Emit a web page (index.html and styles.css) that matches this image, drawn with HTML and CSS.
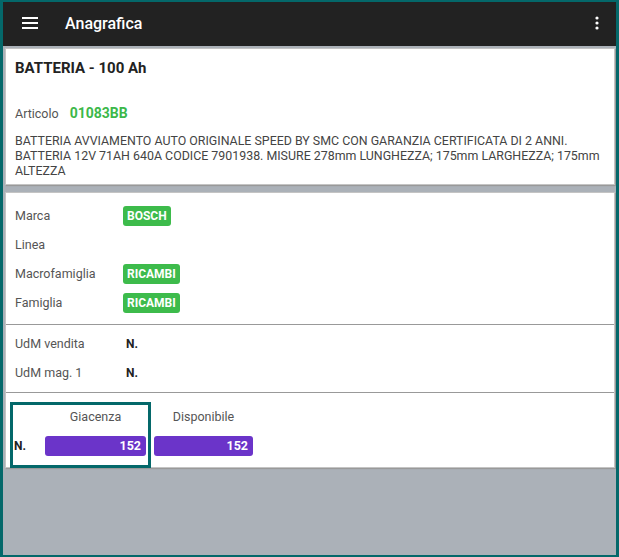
FILE: index.html
```html
<!DOCTYPE html>
<html>
<head>
<meta charset="utf-8">
<link rel="stylesheet" href="styles.css">
</head>
<body>
<div class="screen">
  <header class="appbar">
    <svg class="menu" width="16" height="12" viewBox="0 0 16 12"><rect x="0" y="0" width="16" height="2" fill="#fff"/><rect x="0" y="5" width="16" height="2" fill="#fff"/><rect x="0" y="10" width="16" height="2" fill="#fff"/></svg>
    <div class="title">Anagrafica</div>
    <svg class="more" width="4" height="14" viewBox="0 0 4 14"><circle cx="2" cy="2" r="1.6" fill="#fff"/><circle cx="2" cy="7" r="1.6" fill="#fff"/><circle cx="2" cy="12" r="1.6" fill="#fff"/></svg>
  </header>
  <main class="content">
    <section class="card card-head">
      <h1 class="prod-title">BATTERIA - 100 Ah</h1>
      <div class="art-row"><span class="label">Articolo</span><span class="code">01083BB</span></div>
      <p class="desc">BATTERIA AVVIAMENTO AUTO ORIGINALE SPEED BY SMC CON GARANZIA CERTIFICATA DI 2 ANNI. BATTERIA 12V 71AH 640A CODICE 7901938. MISURE 278mm LUNGHEZZA; 175mm LARGHEZZA; 175mm ALTEZZA</p>
    </section>
    <section class="card card-info">
      <div class="block block-fam">
        <div class="row"><span class="label">Marca</span><span class="chip">BOSCH</span></div>
        <div class="row"><span class="label">Linea</span></div>
        <div class="row"><span class="label">Macrofamiglia</span><span class="chip">RICAMBI</span></div>
        <div class="row"><span class="label">Famiglia</span><span class="chip">RICAMBI</span></div>
      </div>
      <div class="block block-udm">
        <div class="row"><span class="label">UdM vendita</span><span class="unit">N.</span></div>
        <div class="row"><span class="label">UdM mag. 1</span><span class="unit">N.</span></div>
      </div>
      <div class="block block-stock">
        <div class="focus">
          <div class="ucol"><div class="hcell"></div><div class="ulabel">N.</div></div>
          <div class="qcol"><div class="hcell">Giacenza</div><div class="bar">152</div></div>
        </div>
        <div class="qcol qcol2"><div class="hcell">Disponibile</div><div class="bar">152</div></div>
      </div>
    </section>
  </main>
</div>
</body>
</html>
```
FILE: styles.css
```css
* { box-sizing: border-box; }
html, body { margin: 0; padding: 0; }
body { font-family: Roboto, "Liberation Sans", sans-serif; }
.screen {
  width: 619px; height: 557px;
  border: 3px solid #04686a;
  border-top-width: 2px; border-bottom-width: 2px;
  background: #abb1b8;
  display: flex; flex-direction: column;
  overflow: hidden;
}
.appbar {
  height: 44px; background: #222222;
  display: flex; align-items: center;
  padding: 0 0 2px 19px;
  flex: none;
}
.menu { display: block; }
.title { color: #fff; font-size: 16px; font-weight: 500; margin-left: 27px; flex: 1; }
.more { display: block; margin-right: 17px; }
.content { padding: 2px 0 0 2px; display: flex; flex-direction: column; gap: 7px; }
.card {
  background: #fff;
  width: 610px;
  border: 1px solid #c4c4c4;
  box-shadow: 1px 1px 1px #999;
}
.card-head { padding: 9px 12px 6px 9px; }
.prod-title { margin: 0; font-size: 15px; font-weight: 700; color: #222; line-height: 20px; }
.art-row { margin-top: 25px; display: flex; align-items: center; height: 20px; }
.label { font-size: 12.5px; color: #555; }
.code { color: #3cb84a; font-weight: 700; font-size: 14px; margin-left: 11px; }
.desc { margin: 10px 0 0; font-size: 12.4px; line-height: 15px; color: #444; }
.card-info { padding: 0; }
.block { border-bottom: 1px solid #999; }
.block-fam { padding: 8px 0 7px 9px; }
.block-udm { padding: 4px 0 5px 9px; }
.row { height: 29px; display: flex; align-items: center; }
.row .label { width: 108px; }
.chip {
  background: #3dbb4b; color: #fff; font-weight: 700; font-size: 12px;
  height: 20px; line-height: 20px; padding: 0 4px; border-radius: 3px;
}
.unit { font-weight: 700; font-size: 12px; color: #222; margin-left: 3px; }
.block-stock { border-bottom: none; display: flex; padding: 9px 0 0 4px; align-items: flex-start; }
.focus { display: flex; border: 3px solid #04686a; padding: 1px 2px 9px 1px; margin-bottom: -1px; }
.ucol { width: 31px; }
.hcell { height: 22px; line-height: 22px; font-size: 12.5px; color: #555; text-align: center; margin-bottom: 8px; }
.ulabel { height: 20px; line-height: 20px; font-size: 12px; font-weight: 700; color: #222; }
.qcol { width: 101px; }
.qcol2 { width: 99px; margin-left: 3px; padding-top: 4px; }
.bar {
  height: 20px; line-height: 20px; background: #6b34c9; color: #fff;
  font-weight: 700; font-size: 12.5px; text-align: right; padding-right: 5px; border-radius: 3px;
}
```
